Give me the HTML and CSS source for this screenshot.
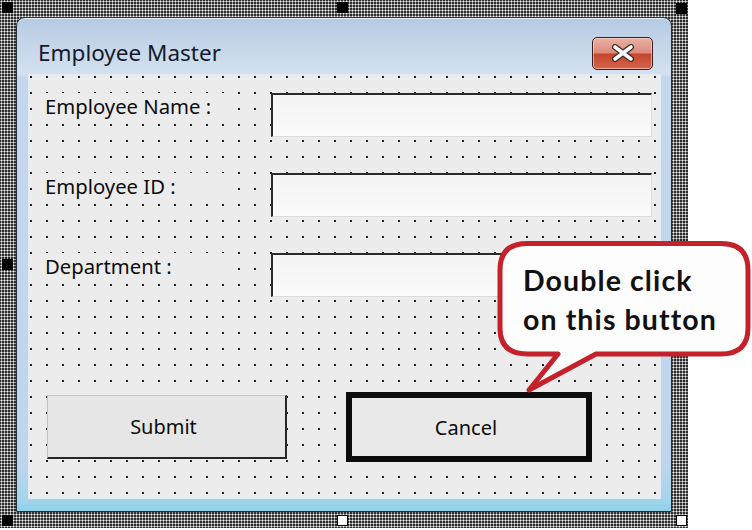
FILE: index.html
```html
<!DOCTYPE html>
<html lang="en">
<head>
    <meta charset="UTF-8">
    <title>Employee Master</title>
    <link rel="stylesheet" href="styles.css">
</head>
<body>
    <div class="stage">
        <div class="selection">
            <span class="handle tl"></span>
            <span class="handle tm"></span>
            <span class="handle tr"></span>
            <span class="handle ml"></span>
            <span class="handle bl"></span>
            <span class="handle bm open"></span>
            <span class="handle br open"></span>

            <div class="window">
                <div class="titlebar">
                    <span class="title">Employee Master</span>
                    <div class="close">
                        <svg width="24" height="18" viewBox="0 0 24 18">
                            <path d="M4 3 L20 15 M20 3 L4 15" stroke="#3a2a2a" stroke-width="6" stroke-linecap="round"/>
                            <path d="M4 3 L20 15 M20 3 L4 15" stroke="#fff" stroke-width="3.6" stroke-linecap="round"/>
                        </svg>
                    </div>
                </div>
                <div class="client">
                    <div class="fields">
                        <div class="label">Employee Name :</div>
                        <div class="textbox"></div>
                        <div class="label">Employee ID :</div>
                        <div class="textbox"></div>
                        <div class="label">Department :</div>
                        <div class="textbox"></div>
                    </div>
                    <div class="buttons">
                        <div class="btn submit">Submit</div>
                        <div class="btn cancel">Cancel</div>
                    </div>
                </div>
            </div>
        </div>

        <!-- speech bubble pointing at the Cancel button -->
        <div class="callout">
            <svg class="bubble" width="257" height="156" viewBox="0 0 257 156">
                <path d="M32 5.5 H226 Q253 5.5 253 32 V90 Q253 116 226 116 H101 L34 152 L63 116 H32 Q5 116 5 90 V32 Q5 5.5 32 5.5 Z"
                      fill="#fdfdfd" stroke="#c4212b" stroke-width="5" stroke-linejoin="round"/>
            </svg>
            <div class="callout-text">Double click<br>on this button</div>
        </div>
    </div>
</body>
</html>
```

FILE: styles.css
```css
body {
    margin: 0;
    background-color: #fff;
    font-family: "Noto Sans", "Open Sans", sans-serif;
}
.stage {
    position: relative;
    width: 752px;
    height: 530px;
    overflow: hidden;
}
.selection {
    position: relative;
    width: 688px;
    height: 528px;
    box-sizing: border-box;
    padding: 17px 16px 16px 16px;
    background-color: #2e2e2e;
    background-image: radial-gradient(circle, #f4f4f4 0.8px, transparent 1.25px);
    background-size: 3px 3px;
}
.handle {
    position: absolute;
    width: 11px;
    height: 11px;
    background-color: #000;
    box-sizing: border-box;
}
.handle.open {
    background-color: #fff;
    border: 1px solid #000;
}
.tl { left: 2px; top: 2px; }
.tm { left: 337px; top: 2px; }
.tr { left: 676px; top: 3px; }
.ml { left: 2px; top: 259px; }
.bl { left: 2px; top: 515px; }
.bm { left: 337px; top: 515px; }
.br { left: 676px; top: 515px; }

.window {
    position: relative;
    height: 100%;
    border: 1px solid #25323e;
    border-radius: 9px 9px 0 0;
    padding: 0 11px 13px 12px;
    box-sizing: border-box;
    display: flex;
    flex-direction: column;
    background: linear-gradient(#b5cbe2 0px, #c6d7ea 30px, #d3e1ef 56px, #c4d7ec 60px, #c0d6ec 440px, #a8d4ec 478px, #8fd3ea 493px);
    box-shadow: inset 0 1px 0 #e9f0f8;
}
.titlebar {
    height: 57px;
    box-sizing: border-box;
    padding: 13px 7px 0 9px;
    display: flex;
    align-items: center;
    justify-content: space-between;
}
.title {
    font-size: 22.5px;
    color: #141a2c;
    padding-bottom: 1px;
}
.close {
    width: 61px;
    height: 33px;
    box-sizing: border-box;
    border: 1px solid #3b1d1d;
    border-radius: 5px;
    background: linear-gradient(#eab0a4 0%, #dc8c7b 48%, #c5452d 52%, #d4644c 100%);
    box-shadow: inset 0 0 0 1px rgba(255, 220, 210, 0.6);
    display: flex;
    align-items: center;
    justify-content: center;
}
.close svg {
    display: block;
}
.client {
    flex: 1;
    background-color: #ececec;
    background-image: radial-gradient(circle, #1f1f1f 0.9px, transparent 1.3px);
    background-size: 16px 16px;
    background-position: -6px -6px;
    box-shadow: 0 0 0 1px #e4ebf3;
}
.fields {
    display: grid;
    grid-template-columns: 200px 381px;
    grid-auto-rows: 44px;
    column-gap: 34px;
    row-gap: 36px;
    padding: 18px 0 0 8px;
}
.label {
    height: 26px;
    line-height: 26px;
    padding-left: 8px;
    font-size: 20.3px;
    color: #0c0c0c;
    background-color: #ececec;
}
.textbox {
    background: linear-gradient(#f4f4f4, #fafafa);
    border-top: 2px solid #2b2b2b;
    border-left: 2px solid #2b2b2b;
    border-right: 1px solid #dcdcdc;
    border-bottom: 1px solid #dcdcdc;
}
.buttons {
    display: flex;
    align-items: center;
    margin-top: 95px;
    padding-left: 18px;
}
.btn {
    display: flex;
    align-items: center;
    justify-content: center;
    box-sizing: border-box;
    font-size: 20px;
    color: #0c0c0c;
    background-color: #e6e6e6;
}
.submit {
    width: 240px;
    height: 64px;
    padding-right: 6px;
    border-top: 1px solid #c2c2c2;
    border-left: 1px solid #c2c2c2;
    border-right: 2px solid #262626;
    border-bottom: 2px solid #262626;
}
.cancel {
    width: 246px;
    height: 70px;
    margin-left: 59px;
    padding-right: 6px;
    border: 6px solid #0b0b0b;
    background-color: #e9e9e9;
}

.callout {
    position: absolute;
    left: 495px;
    top: 238px;
    width: 257px;
    height: 156px;
}
.bubble {
    position: absolute;
    left: 0;
    top: 0;
}
.callout-text {
    position: relative;
    padding: 23px 0 0 28px;
    font-family: "Lato", "Open Sans", sans-serif;
    font-weight: bold;
    font-size: 28.5px;
    line-height: 39px;
    letter-spacing: 1.1px;
    color: #111;
}
```
